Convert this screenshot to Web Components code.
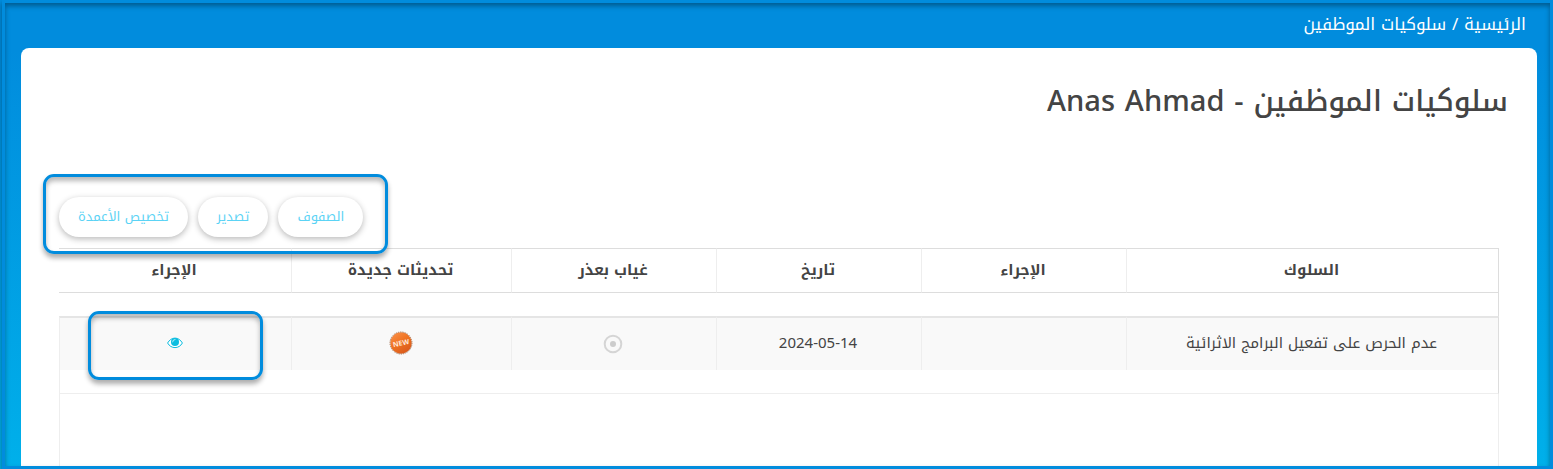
<!DOCTYPE html>
<html lang="ar" dir="rtl">
<head>
<meta charset="utf-8">
<meta name="viewport" content="width=device-width, initial-scale=1">
<title>سلوكيات الموظفين</title>
<style>
  body {
    margin: 0;
    font-family: "Noto Kufi Arabic", "Noto Sans Arabic", "Noto Sans", "DejaVu Sans", sans-serif;
    font-size: 15px;
    color: #444;
  }
</style>
</head>
<body>
<behavior-page></behavior-page>

<script>
/* Outline drawn over whatever box it is placed in */
class HighlightBox extends HTMLElement {
  connectedCallback() {
    if (this.shadowRoot) return;
    const shadow = this.attachShadow({ mode: 'open' });
    shadow.innerHTML = `
      <style>
        :host {
          display: block; position: absolute; box-sizing: border-box;
          border: 3px solid #018cdd; border-radius: 11px;
          box-shadow: 0 4px 5px rgba(0,0,0,0.32), inset 0 4px 5px rgba(0,0,0,0.28);
          pointer-events: none;
        }
      </style>
    `;
  }
}

/* Breadcrumb trail over the card */
class CrumbTrail extends HTMLElement {
  connectedCallback() {
    if (this.shadowRoot) return;
    const shadow = this.attachShadow({ mode: 'open' });
    shadow.innerHTML = `
      <style>
        :host { display: block; color: #fff; font-size: 17px; line-height: 24px; }
        a { color: inherit; text-decoration: none; }
      </style>
      <nav><a href="#home">الرئيسية</a> / <slot></slot></nav>
    `;
  }
}

/* White rounded surface */
class PageCard extends HTMLElement {
  connectedCallback() {
    if (this.shadowRoot) return;
    const shadow = this.attachShadow({ mode: 'open' });
    shadow.innerHTML = `
      <style>
        :host {
          display: flex; flex-direction: column; flex: 1;
          background: #fff; border-radius: 8px 8px 0 0;
        }
        h1 { margin: 0; padding: 32px 29px 0; font-size: 29px; line-height: 44px; font-weight: 500; }
        .content { display: flex; flex-direction: column; flex: 1; padding: 73px 38px 0; }
      </style>
      <h1><slot name="title"></slot></h1>
      <div class="content"><slot></slot></div>
    `;
  }
}

class PillButton extends HTMLElement {
  connectedCallback() {
    if (this.shadowRoot) return;
    const shadow = this.attachShadow({ mode: 'open' });
    shadow.innerHTML = `
      <style>
        :host { display: block; font-size: 13px; }
        button {
          display: block; height: 40px; padding: 0 19px 2px; border: 0; border-radius: 20px;
          background: #fff; color: #5bd3f5; font: inherit; white-space: nowrap; cursor: pointer;
          box-shadow: 0 2px 6px rgba(0,0,0,0.28);
        }
      </style>
      <button type="button"><slot></slot></button>
    `;
  }
}

class TableTools extends HTMLElement {
  connectedCallback() {
    if (this.shadowRoot) return;
    const shadow = this.attachShadow({ mode: 'open' });
    shadow.innerHTML = `
      <style>
        :host { display: flex; justify-content: flex-end; padding-bottom: 11px; }
        .group { display: flex; gap: 10px; position: relative; }
        highlight-box { top: -23px; right: -25px; bottom: -17px; left: -16px; z-index: 1; }
      </style>
      <div class="group">
        <slot></slot>
        <highlight-box></highlight-box>
      </div>
    `;
  }
}

/* Icons of the table cells: eye, dot, new */
class CellIcon extends HTMLElement {
  connectedCallback() {
    if (this.shadowRoot) return;
    const icons = {
      eye: `<svg width="16" height="12" viewBox="0 0 16 12">
        <path d="M.6 6C2.300 3 4.900 1.100 8 1.100S13.700 3 15.400 6C13.700 9 11.100 10.600 8 10.600S2.300 9 .6 6Z" fill="#fff" stroke="#0bbde0"/>
        <circle cx="8" cy="4.900" r="4" fill="#0bbde0"/>
        <path d="M5.600 4.900A2.400 2.400 0 0 1 8 2.500" fill="none" stroke="#fff" stroke-width=".7" stroke-linecap="round"/>
      </svg>`,
      dot: `<svg width="20" height="20" viewBox="0 0 20 20">
        <circle cx="10" cy="10" r="8.300" fill="none" stroke="#d5d5d5" stroke-width="2"/>
        <circle cx="10" cy="10" r="3" fill="#ccc"/>
      </svg>`,
      new: `<svg width="24" height="24" viewBox="0 0 24 24">
        <defs><linearGradient id="g" x1="0" y1="0" x2=".7" y2="1">
          <stop offset="0" stop-color="#fa9450"/><stop offset=".5" stop-color="#f07423"/><stop offset="1" stop-color="#d95a1c"/>
        </linearGradient></defs>
        <circle cx="12" cy="12" r="10.700" fill="url(#g)"/>
        <circle cx="12" cy="12" r="11" fill="none" stroke="#a5775a" stroke-width="1" stroke-dasharray="1.300 1"/>
        <text x="12" y="14.500" text-anchor="middle" transform="rotate(-12 12 12)" direction="ltr"
          font-family="Open Sans, sans-serif" font-size="7" font-weight="700" fill="#ffe9dc">NEW</text>
      </svg>`
    };
    const shadow = this.attachShadow({ mode: 'open' });
    shadow.innerHTML = `
      <style>
        :host { display: inline-block; vertical-align: middle; }
        svg { display: block; }
      </style>
      ${icons[this.getAttribute('name')]}
    `;
  }
}

class BehaviorTable extends HTMLElement {
  connectedCallback() {
    if (this.shadowRoot) return;
    const shadow = this.attachShadow({ mode: 'open' });
    shadow.innerHTML = `
      <style>
        :host { display: flex; flex-direction: column; flex: 1; }
        table { width: 100%; table-layout: fixed; border-collapse: separate; border-spacing: 0; }
        th, td { box-sizing: border-box; padding: 0 10px 2px 8px; text-align: center; vertical-align: middle; line-height: 24px; }
        th { height: 45px; border: solid #ddd; border-width: 1px 0; border-left: 1px solid #eee; font-weight: 700; }
        th:first-child { border-right: 1px solid #ddd; }
        th:last-child { border-left: 0; }
        .gap td { height: 23px; padding: 0; border-right: 1px solid #ddd; }
        .row td { height: 54px; border-left: 1px solid #eee; border-top: 2px solid #e5e5e5; background: #f9f9f9; }
        .row td:first-child { border-right: 1px solid #ddd; }
        .end td { height: 24px; border-left: 1px solid #eee; border-bottom: 1px solid #eee; }
        .action { position: relative; }
        highlight-box { top: -7px; right: 28px; bottom: -10px; left: 28px; }
        button { display: block; margin: 0 auto; padding: 0; border: 0; background: none; cursor: pointer; line-height: 0; }
        .rest { flex: 1; min-height: 72px; border: solid #eee; border-width: 0 1px; }
      </style>
      <table>
        <colgroup>
          <col style="width: 373px"><col style="width: 205px"><col style="width: 205px">
          <col style="width: 205px"><col style="width: 220px"><col style="width: 232px">
        </colgroup>
        <thead>
          <tr><th>السلوك</th><th>الإجراء</th><th>تاريخ</th><th>غياب بعذر</th><th>تحديثات جديدة</th><th>الإجراء</th></tr>
        </thead>
        <tbody>
          <tr class="gap"><td colspan="6"></td></tr>
          <tr class="row">
            <td>عدم الحرص على تفعيل البرامج الاثرائية</td>
            <td></td>
            <td>2024-05-14</td>
            <td><cell-icon name="dot"></cell-icon></td>
            <td><cell-icon name="new"></cell-icon></td>
            <td class="action">
              <button type="button" aria-label="عرض"><cell-icon name="eye"></cell-icon></button>
              <highlight-box></highlight-box>
            </td>
          </tr>
          <tr class="gap end"><td colspan="6"></td></tr>
        </tbody>
      </table>
      <div class="rest"></div>
    `;
  }
}

class BehaviorPage extends HTMLElement {
  connectedCallback() {
    if (this.shadowRoot) return;
    const shadow = this.attachShadow({ mode: 'open' });
    shadow.innerHTML = `
      <style>
        :host {
          display: flex; flex-direction: column; position: relative; box-sizing: border-box;
          min-height: 100vh; padding: 12px 16px 0 21px;
          background: linear-gradient(#018cdd 0, #018cdd 50px, #00b0ea 100%);
        }
        crumb-trail { padding: 0 11px 12px; }
        .frame {
          top: 0; right: 0; bottom: 0; left: 2px; border-radius: 0; z-index: 2;
          box-shadow: 0 3px 5px rgba(0,0,0,0.4), inset 0 3px 5px rgba(0,0,0,0.35);
        }
      </style>
      <crumb-trail>سلوكيات الموظفين</crumb-trail>
      <page-card>
        <span slot="title">سلوكيات الموظفين - Anas Ahmad</span>
        <table-tools>
          <pill-button>الصفوف</pill-button>
          <pill-button>تصدير</pill-button>
          <pill-button>تخصيص الأعمدة</pill-button>
        </table-tools>
        <behavior-table></behavior-table>
      </page-card>
      <highlight-box class="frame"></highlight-box>
    `;
  }
}

customElements.define('highlight-box', HighlightBox);
customElements.define('crumb-trail', CrumbTrail);
customElements.define('page-card', PageCard);
customElements.define('pill-button', PillButton);
customElements.define('table-tools', TableTools);
customElements.define('cell-icon', CellIcon);
customElements.define('behavior-table', BehaviorTable);
customElements.define('behavior-page', BehaviorPage);
</script>
</body>
</html>
